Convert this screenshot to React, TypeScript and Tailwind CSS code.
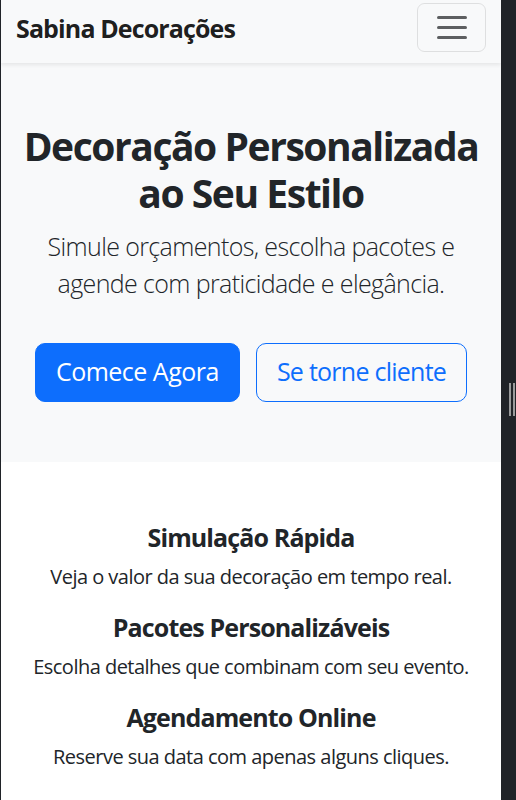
import React from "react";

const features = [
  { title: "Simulação Rápida", text: "Veja o valor da sua decoração em tempo real." },
  { title: "Pacotes Personalizáveis", text: "Escolha detalhes que combinam com seu evento." },
  { title: "Agendamento Online", text: "Reserve sua data com apenas alguns cliques." },
];

export default function App() {
  return (
    <div className="flex h-[800px] w-[516px] overflow-hidden bg-[#202328] font-['Open_Sans',sans-serif] text-[#212529]">
      <div className="ml-px h-full w-[500px] overflow-hidden bg-white">
        {/* navbar */}
        <nav className="relative z-10 flex h-[63px] justify-between bg-[#f8f9fa] px-[15px] shadow-[0_2px_4px_rgba(0,0,0,0.08)]">
          <a className="mt-[10px] text-[25px] font-bold leading-[37.5px] tracking-[-0.035em] text-black/90">
            Sabina Decorações
          </a>
          <button className="mt-[3px] flex h-[49px] w-[69px] flex-col items-center justify-center gap-[7.5px] rounded-[7.5px] border border-black/10">
            <span className="h-[2.5px] w-[30px] rounded-full bg-[#5d5f61]" />
            <span className="h-[2.5px] w-[30px] rounded-full bg-[#5d5f61]" />
            <span className="h-[2.5px] w-[30px] rounded-full bg-[#5d5f61]" />
          </button>
        </nav>

        {/* hero */}
        <section className="bg-[#f8f9fa] px-[15px] pt-[60px] pb-[60px] text-center">
          <h1 className="mb-[11px] text-[39px] font-bold leading-[46.8px] tracking-[-0.037em]">
            Decoração Personalizada ao Seu Estilo
          </h1>
          <p className="mx-auto mb-[40px] w-[420px] text-[25px] font-light leading-[37.5px] tracking-[-0.025em]">
            Simule orçamentos, escolha pacotes e agende com praticidade e elegância.
          </p>
          <div className="flex justify-center gap-4">
            <button className="h-[59px] rounded-[10px] border border-[#0d6efd] bg-[#0d6efd] px-[20px] text-[25px] tracking-[-0.02em] text-white">
              Comece Agora
            </button>
            <button className="h-[59px] rounded-[10px] border border-[#0d6efd] px-[20px] text-[25px] tracking-[-0.03em] text-[#0d6efd]">
              Se torne cliente
            </button>
          </div>
        </section>

        {/* features */}
        <section className="px-[15px] pt-[60px] text-center">
          {features.map((f) => (
            <div key={f.title}>
              <h5 className="mb-[10px] text-[25px] font-bold leading-[30px] tracking-[-0.035em]">{f.title}</h5>
              <p className="mb-[20px] text-[20px] leading-[30px] tracking-[-0.026em]">{f.text}</p>
            </div>
          ))}
        </section>
      </div>

      {/* scrollbar */}
      <div className="flex w-[15px] flex-col pt-[383px]">
        <div className="ml-[8px] flex gap-[2px]">
          <span className="h-[33px] w-[2px] bg-[#9a9b9c]" />
          <span className="h-[33px] w-[2px] bg-[#9a9b9c]" />
        </div>
      </div>
    </div>
  );
}
